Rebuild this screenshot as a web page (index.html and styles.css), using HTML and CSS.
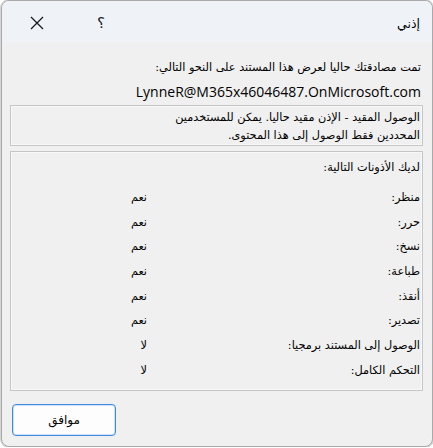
FILE: index.html
```html
<!DOCTYPE html>
<html lang="ar">
<head>
<meta charset="utf-8">
<link rel="stylesheet" href="styles.css">
</head>
<body>
<div class="window" dir="rtl">
  <div class="titlebar">
    <span class="title">إذني</span>
    <span class="spacer"></span>
    <span class="help">؟</span>
    <span class="close">
      <svg width="16" height="16" viewBox="0 0 16 16"><path d="M2 2 L14 14 M14 2 L2 14" stroke="#1a1a1a" stroke-width="1.3" fill="none"/></svg>
    </span>
  </div>
  <div class="content">
    <p class="line">تمت مصادقتك حاليا لعرض هذا المستند على النحو التالي:</p>
    <p class="email" dir="ltr">LynneR@M365x46046487.OnMicrosoft.com</p>
    <div class="box notice">
      <p>الوصول المقيد - الإذن مقيد حاليا. يمكن للمستخدمين</p>
      <p>المحددين فقط الوصول إلى هذا المحتوى.</p>
    </div>
    <div class="box perms">
      <p class="head">لديك الأذونات التالية:</p>
      <div class="grid">
        <span>منظر:</span><span>نعم</span>
        <span>حرر:</span><span>نعم</span>
        <span>نسخ:</span><span>نعم</span>
        <span>طباعة:</span><span>نعم</span>
        <span>أنقذ:</span><span>نعم</span>
        <span>تصدير:</span><span>نعم</span>
        <span>الوصول إلى المستند برمجيا:</span><span>لا</span>
        <span>التحكم الكامل:</span><span>لا</span>
      </div>
    </div>
    <div class="footer">
      <button class="ok">موافق</button>
    </div>
  </div>
</div>
</body>
</html>
```
FILE: styles.css
```css
html, body {
  margin: 0;
  padding: 0;
  background: #ffffff;
}
body {
  font-family: "DejaVu Sans", "Noto Sans", sans-serif;
  font-size: 11.3px;
  color: #000;
}
p { margin: 0; }
.window {
  box-sizing: border-box;
  width: 432px;
  height: 447px;
  margin: 0 0 0 1px;
  border: 1px solid #a9a9a9;
  border-radius: 8px;
  overflow: hidden;
  background: #f0f0f0;
  box-shadow: 0 0 0 1px #d6d6d6;
}
.titlebar {
  height: 42px;
  background: #eff3f8;
  display: flex;
  align-items: center;
  padding: 2px 12px 0 27px;
  box-sizing: border-box;
}
.title { font-size: 12.5px; }
.spacer { flex: 1; }
.help {
  font-size: 15px;
  width: 20px;
  text-align: center;
  margin-left: 46px;
  color: #1a1a1a;
}
.close { display: flex; }
.content {
  padding: 15px 9px 0 8px;
}
.line { line-height: 20px; padding-right: 2px; }
.email {
  font-family: "Open Sans", "DejaVu Sans", sans-serif;
  font-size: 14px;
  line-height: 24px;
  text-align: right;
  padding-right: 2px;
  margin-top: 2px;
  margin-bottom: 0;
}
.box {
  border: 1px solid #c6c6c6;
  box-shadow: inset 0 0 0 1px #f8f8f8;
}
.notice {
  margin-top: 1px;
  height: 41px;
  box-sizing: border-box;
  padding: 3px 2px 0 0;
  line-height: 18px;
}
.perms {
  margin-top: 5px;
  height: 240px;
  box-sizing: border-box;
  padding: 6px 2px 0 0;
}
.head { line-height: 20px; }
.grid {
  display: grid;
  grid-template-columns: 273px auto;
  grid-auto-rows: 24.7px;
  margin-top: 7px;
  align-items: center;
}
.footer {
  padding-top: 13px;
  display: flex;
  justify-content: flex-end;
}
.ok {
  width: 104px;
  height: 32px;
  margin-left: 2px;
  background: #fdfdfd;
  border: 1px solid #3c8be0;
  border-radius: 4px;
  font-family: "DejaVu Sans", sans-serif;
  font-size: 12px;
  color: #000;
  box-shadow: inset 0 0 0 1px #cfe2f7;
}
```
